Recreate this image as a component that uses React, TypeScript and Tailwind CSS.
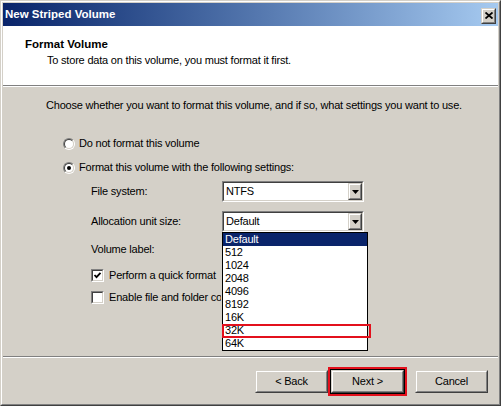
import React from "react";

// classic 3D edges
const sunkenOuter = "border border-t-[#808080] border-l-[#808080] border-r-white border-b-white";
const sunkenInner = "border border-t-[#404040] border-l-[#404040] border-r-[#d4d0c8] border-b-[#d4d0c8]";
const raisedOuter = "border border-t-[#d4d0c8] border-l-[#d4d0c8] border-r-[#404040] border-b-[#404040]";
const raisedInner = "border border-t-white border-l-white border-r-[#808080] border-b-[#808080]";

function Radio({ checked }: { checked?: boolean }) {
    return (
        <div className={`w-[12px] h-[12px] rounded-full ${sunkenOuter}`}>
            <div className={`w-full h-full rounded-full bg-white flex items-center justify-center ${sunkenInner}`}>
                {checked && <div className="w-[4px] h-[4px] rounded-full bg-black" />}
            </div>
        </div>
    );
}

function Check({ checked }: { checked?: boolean }) {
    return (
        <div className={`w-[13px] h-[13px] shrink-0 ${sunkenOuter}`}>
            <div className={`w-full h-full bg-white flex items-center justify-center ${sunkenInner}`}>
                {checked && (
                    <svg width="9" height="9" viewBox="0 0 9 9">
                        <polyline points="1.5,4 3.5,6.2 7.5,1.8" fill="none" stroke="black" strokeWidth="1.8" />
                    </svg>
                )}
            </div>
        </div>
    );
}

function Arrow() {
    return (
        <div className={`w-[14px] h-full bg-[#d4d0c8] ${raisedOuter}`}>
            <div className={`w-full h-full flex items-center justify-center ${raisedInner}`}>
                <svg width="7" height="4" viewBox="0 0 7 4">
                    <polygon points="0,0 7,0 3.5,4" fill="black" />
                </svg>
            </div>
        </div>
    );
}

function Combo({ value, children }: { value: string; children?: React.ReactNode }) {
    return (
        <div className={`relative w-[142px] h-[21px] ${sunkenOuter}`}>
            <div className={`w-full h-full bg-white flex items-center ${sunkenInner}`}>
                <span className="flex-1 pl-[2px]">{value}</span>
                <Arrow />
            </div>
            {children}
        </div>
    );
}

function Btn({ label }: { label: string }) {
    return (
        <div className={`w-[73px] h-[23px] bg-[#d4d0c8] ${raisedOuter}`}>
            <div className={`w-full h-full flex items-center justify-center ${raisedInner}`}>{label}</div>
        </div>
    );
}

const sizes = ["Default", "512", "1024", "2048", "4096", "8192", "16K", "32K", "64K"];

export default function App() {
    return (
        <div className="w-[503px] h-[407px] bg-white font-['Liberation_Sans',Arial,sans-serif] text-[11px] tracking-[-0.2px] text-black">
            <div className={`w-[501px] h-[406px] bg-[#d4d0c8] ${raisedOuter}`}>
                <div className={`w-full h-full p-[1px] flex flex-col ${raisedInner}`}>
                    {/* title bar */}
                    <div className="h-[23px] flex items-center justify-between pl-[2px] pr-[2px] bg-gradient-to-r from-[#0a246a] to-[#a6caf0]">
                        <span className="text-white font-bold text-[11.5px] tracking-normal">New Striped Volume</span>
                        <div className={`w-[15px] h-[16px] mt-[2px] bg-[#d4d0c8] ${raisedOuter}`}>
                            <div className={`w-full h-full flex items-center justify-center ${raisedInner}`}>
                                <svg width="8" height="7" viewBox="0 0 8 7">
                                    <path d="M0.5 0.5 L7.5 6.5 M7.5 0.5 L0.5 6.5" stroke="black" strokeWidth="1.8" />
                                </svg>
                            </div>
                        </div>
                    </div>

                    {/* header */}
                    <div className="h-[59px] bg-white pt-[11px]">
                        <div className="pl-[22px] font-bold text-[11.5px] tracking-normal leading-[14px]">Format Volume</div>
                        <div className="pl-[44px] mt-[3px] leading-[13px]">To store data on this volume, you must format it first.</div>
                    </div>
                    <div className="h-[1px] bg-[#808080]" />
                    <div className="h-[1px] bg-white" />

                    {/* body */}
                    <div className="flex-1 pt-[12px] flex flex-col">
                        <div className="pl-[43px] leading-[13px]">
                            Choose whether you want to format this volume, and if so, what settings you want to use.
                        </div>
                        <div className="mt-[25px] ml-[60px] h-[13px] flex items-center gap-[4px]">
                            <Radio />
                            <span>Do not format this volume</span>
                        </div>
                        <div className="mt-[11px] ml-[60px] h-[13px] flex items-center gap-[4px]">
                            <Radio checked />
                            <span>Format this volume with the following settings:</span>
                        </div>
                        <div className="mt-[7px] ml-[88px] flex items-center">
                            <span className="w-[131px]">File system:</span>
                            <Combo value="NTFS" />
                        </div>
                        <div className="mt-[9px] ml-[88px] flex items-center relative z-10">
                            <span className="w-[131px]">Allocation unit size:</span>
                            <Combo value="Default">
                                <div className="absolute left-[-1px] top-[20px] w-[146px] h-[119px] border border-black bg-white">
                                    {sizes.map((s, i) => (
                                        <div
                                            key={s}
                                            className={`h-[13px] leading-[13px] pl-[2px] ${i === 0 ? "bg-[#0a246a] text-white" : ""}`}
                                        >
                                            {s}
                                        </div>
                                    ))}
                                    <div className="absolute left-[-1px] top-[91px] w-[149px] h-[14px] border-2 border-[#e3101c]" />
                                </div>
                            </Combo>
                        </div>
                        <div className="mt-[7px] ml-[88px] flex items-center">
                            <span className="w-[131px]">Volume label:</span>
                            <div className={`w-[142px] h-[21px] ${sunkenOuter}`}>
                                <div className={`w-full h-full bg-white ${sunkenInner}`} />
                            </div>
                        </div>
                        <div className="mt-[9px] ml-[88px] h-[13px] flex items-center gap-[5px]">
                            <Check checked />
                            <span>Perform a quick format</span>
                        </div>
                        <div className="mt-[9px] ml-[88px] h-[13px] flex items-center gap-[5px]">
                            {/* the open list hides the end of this label */}
                            <Check />
                            <span className="w-[112px] overflow-hidden whitespace-nowrap">Enable file and folder compression</span>
                        </div>
                    </div>

                    {/* footer */}
                    <div className="h-[1px] bg-[#808080]" />
                    <div className="h-[1px] bg-white" />
                    <div className="h-[45px] pt-[1px] flex items-center pl-[252px]">
                        <Btn label="< Back" />
                        <div className="border-2 border-[#e3101c]">
                            <div className="border border-black">
                                <Btn label="Next >" />
                            </div>
                        </div>
                        <div className="ml-[8px]">
                            <Btn label="Cancel" />
                        </div>
                    </div>
                </div>
            </div>
        </div>
    );
}
